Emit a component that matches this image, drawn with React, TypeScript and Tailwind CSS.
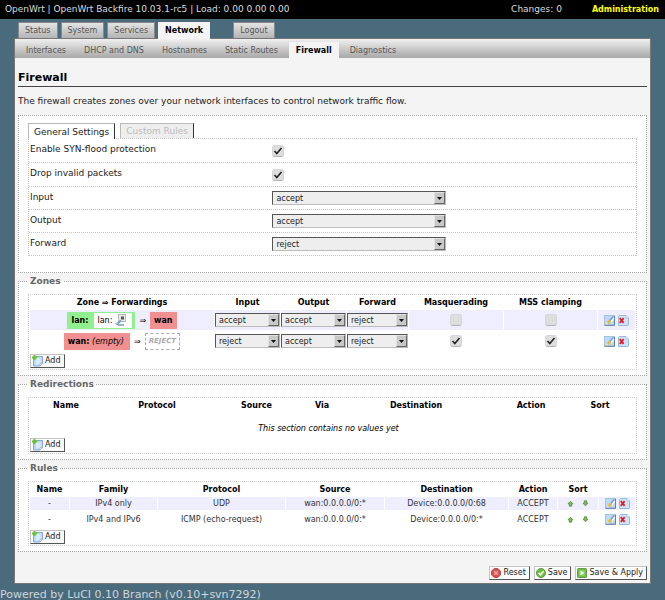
import React from "react";

function AddIcon() {
  return (
    <svg width="11" height="12" viewBox="0 0 11 12" aria-hidden="true">
      <path d="M1.500 1.500h9v7l-2.500 2.500h-6.500z" fill="#bcdcf8" stroke="#86a8d0" />
      <path d="M4 3.500h4.500v4L6.500 9.500H4z" fill="#d9ecfc" />
      <path d="M10.500 8.500H8V11z" fill="#fff" stroke="#86a8d0" strokeWidth="0.600" />
      <path d="M2.500 0v5M0 2.500h5" stroke="#6cc02e" strokeWidth="1.800" />
    </svg>
  );
}

function EditIcon() {
  return (
    <svg width="11" height="11" viewBox="0 0 11 11" aria-hidden="true">
      <rect x="0.500" y="0.500" width="10" height="9.500" fill="#bcdaf6" stroke="#a3c2e4" />
      <path d="M0.500 10.300h10V1" fill="none" stroke="#5f7fa8" />
      <path d="M9.300 1.500L6 5.500" stroke="#6f9fdc" strokeWidth="1.800" />
      <path d="M9.800 3L7 7" stroke="#f4faff" strokeWidth="1.400" />
      <path d="M6.200 5.200L3.600 8.500" stroke="#e8b92c" strokeWidth="2.600" />
      <path d="M2.600 7.200L2 9.500l2.600-.6z" fill="#fbe9a0" />
    </svg>
  );
}

function DeleteIcon() {
  return (
    <svg width="11" height="11" viewBox="0 0 11 11" aria-hidden="true">
      <path d="M0.500 1.500l1-1H8L10.500 3v7l-.5.500H0.500z" fill="#cde3f9" stroke="#98b9e0" />
      <path d="M8 0.500V3h2.500" fill="#fff" stroke="#98b9e0" strokeWidth="0.700" />
      <path d="M1.800 3.200l3.800 4.600M5.600 3.200L1.800 7.800" stroke="#e0222a" strokeWidth="1.900" />
    </svg>
  );
}

function ArrowIcon({ down = false }: { down?: boolean }) {
  return (
    <svg width="7" height="7" viewBox="0 0 7 7" aria-hidden="true">
      <path
        d={down ? "M3.500 5.800L1 3.200h1.300V0.800h2.400v2.400H6z" : "M3.500 1.200L6 3.800H4.700v2.400H2.300V3.800H1z"}
        fill="#7cc04a"
        stroke="#5c8644"
        strokeWidth="0.800"
      />
    </svg>
  );
}

function NetworkIcon() {
  return (
    <svg width="12" height="12" viewBox="0 0 12 12" aria-hidden="true">
      <rect x="3.500" y="0.500" width="7" height="7" fill="#e8e8e8" stroke="#bbb" />
      <rect x="6" y="2.500" width="3" height="3" fill="#555" />
      <path d="M6 6.500L2.500 9.500" stroke="#6f9bd0" strokeWidth="2" />
      <path d="M0.500 9.500l3 1.500h5.500" fill="none" stroke="#7898bd" strokeWidth="1.300" />
    </svg>
  );
}

function ResetIcon() {
  return (
    <svg width="10" height="10" viewBox="0 0 11 11" aria-hidden="true">
      <path d="M3.500 0.500h4l3 3v4l-3 3h-4l-3-3v-4z" fill="#d85050" stroke="#a84848" />
      <path d="M3.500 3.500l4 4M7.500 3.500l-4 4" stroke="#eba8a8" strokeWidth="1.500" />
    </svg>
  );
}

function SaveIcon() {
  return (
    <svg width="10" height="10" viewBox="0 0 11 11" aria-hidden="true">
      <circle cx="5.500" cy="5.500" r="5" fill="#6cc040" stroke="#5a9440" />
      <path d="M2.800 5.500l2 2 3.500-4" fill="none" stroke="#fff" strokeWidth="1.600" />
    </svg>
  );
}

function ApplyIcon() {
  return (
    <svg width="10" height="10" viewBox="0 0 11 11" aria-hidden="true">
      <rect x="0.500" y="0.500" width="10" height="10" rx="1" fill="#6cc040" stroke="#5a9440" />
      <rect x="2.500" y="2.500" width="6" height="6" fill="#8fd46a" />
      <path d="M4 3l4 2.500L4 8z" fill="#fff" />
    </svg>
  );
}

function Button({ icon, children }: { icon: React.ReactNode; children: React.ReactNode }) {
  return (
    <button
      type="button"
      className="flex h-[14px] items-center gap-[2px] border border-t-[#c4c4c4] border-r-[#555] border-b-[#555] border-l-[#c4c4c4] bg-[#fcfcfc] pr-[3px] pl-px text-[8px] leading-[10px] text-[#222]"
    >
      {icon}
      {children}
    </button>
  );
}

function Check({ id, label, checked }: { id?: string; label?: string; checked: boolean }) {
  return (
    <span className="inline-grid align-middle">
      <input
        id={id}
        aria-label={label}
        type="checkbox"
        defaultChecked={checked}
        className="peer col-start-1 row-start-1 size-[12px] appearance-none rounded-[3px] border border-[#d6d6d6] border-b-[#b4b4b4] bg-[#dedede]"
      />
      <svg
        width="12"
        height="12"
        viewBox="0 0 12 12"
        aria-hidden="true"
        className="pointer-events-none invisible col-start-1 row-start-1 peer-checked:visible"
      >
        <path d="M2.500 6l2.300 2.500L9.500 3" fill="none" stroke="#222" strokeWidth="1.600" />
      </svg>
    </span>
  );
}

function Select({ id, label, value }: { id?: string; label?: string; value: string }) {
  return (
    <span className="grid w-full border border-t-[#555] border-r-[#bbb] border-b-[#bbb] border-l-[#555] bg-[#eee]">
      <select
        id={id}
        aria-label={label}
        defaultValue={value}
        className="col-start-1 row-start-1 h-[12px] w-full appearance-none bg-transparent pt-[2px] pl-[3px] text-[8px] leading-[10px] text-[#222]"
      >
        <option>accept</option>
        <option>reject</option>
        <option>drop</option>
      </select>
      <span className="pointer-events-none col-start-1 row-start-1 flex h-[12px] w-[11px] items-center justify-center justify-self-end border border-t-[#e2e2e2] border-r-[#666] border-b-[#666] border-l-[#e2e2e2] bg-[#c8c8c8]">
        <svg width="5" height="3" viewBox="0 0 5 3" aria-hidden="true">
          <path d="M0 0h5L2.500 3z" fill="#111" />
        </svg>
      </span>
    </span>
  );
}

function Section({ title, children }: { title: string; children: React.ReactNode }) {
  return (
    <fieldset className="mt-[3px] min-w-0 border border-dotted border-[#a4a4a4] bg-white px-[9px] pb-[5px]">
      <legend className="px-[2px] text-[9px] leading-[11px] font-bold text-[#666]">{title}</legend>
      <div className="mt-[7px] border border-dotted border-[#cccccc] pb-px">
        {children}
        <div className="mt-[2px] ml-px flex">
          <Button icon={<AddIcon />}>Add</Button>
        </div>
      </div>
    </fieldset>
  );
}

const tableClass =
  "w-full table-fixed border-separate border-spacing-px text-center text-[8px] leading-[13px] text-[#333] [&_td]:p-0 [&_th]:p-0 [&_th]:text-black";

function RowActions() {
  return (
    <div className="flex items-center justify-center gap-[3px]">
      <button type="button" aria-label="Edit">
        <EditIcon />
      </button>
      <button type="button" aria-label="Delete">
        <DeleteIcon />
      </button>
    </div>
  );
}

function ZoneCells({ zone, input, checked }: { zone: string; input: string; checked: boolean }) {
  return (
    <>
      <td>
        <Select label={`${zone} input`} value={input} />
      </td>
      <td>
        <Select label={`${zone} output`} value="accept" />
      </td>
      <td>
        <Select label={`${zone} forward`} value="reject" />
      </td>
      <td>
        <Check label={`${zone} masquerading`} checked={checked} />
      </td>
      <td>
        <Check label={`${zone} MSS clamping`} checked={checked} />
      </td>
      <td>
        <RowActions />
      </td>
    </>
  );
}

function Zones() {
  return (
    <table className={tableClass}>
      <colgroup>
        <col className="w-[184px]" />
        <col className="w-[65px]" />
        <col className="w-[65px]" />
        <col className="w-[61px]" />
        <col className="w-[94px]" />
        <col className="w-[93px]" />
        <col className="w-[37px]" />
      </colgroup>
      <thead>
        <tr>
          <th>Zone ⇒ Forwardings</th>
          <th>Input</th>
          <th>Output</th>
          <th>Forward</th>
          <th>Masquerading</th>
          <th>MSS clamping</th>
          <th />
        </tr>
      </thead>
      <tbody>
        <tr className="h-[20px] [&_td]:bg-[#eeeeff]">
          <td>
            <div className="flex items-center justify-center gap-1 text-black">
              <span className="flex h-[17px] items-center gap-[6px] bg-[#90f090] pr-[3px] pl-1">
                <b>lan:</b>
                <span className="flex h-[15px] items-center gap-[3px] bg-white pr-[5px] pl-[3px]">
                  lan: <NetworkIcon />
                </span>
              </span>
              <span>⇒</span>
              <b className="h-[17px] bg-[#f09090] px-1 leading-[17px]">wan</b>
            </div>
          </td>
          <ZoneCells zone="lan" input="accept" checked={false} />
        </tr>
        <tr className="h-[20px]">
          <td>
            <div className="flex items-center justify-center gap-1 text-black">
              <span className="h-[17px] bg-[#f09090] pr-[6px] pl-1 leading-[17px]">
                <b>wan:</b> <i>(empty)</i>
              </span>
              <span>⇒</span>
              <b className="h-[17px] border border-dashed border-[#aaa] px-[3px] text-[7px] leading-[15px] text-[#aaa] italic">
                REJECT
              </b>
            </div>
          </td>
          <ZoneCells zone="wan" input="reject" checked />
        </tr>
      </tbody>
    </table>
  );
}

function Redirections() {
  return (
    <table className={tableClass}>
      <colgroup>
        <col className="w-[72px]" />
        <col className="w-[108px]" />
        <col className="w-[89px]" />
        <col className="w-[40px]" />
        <col className="w-[146px]" />
        <col className="w-[82px]" />
        <col className="w-[54px]" />
        <col className="w-[7px]" />
      </colgroup>
      <thead>
        <tr>
          <th>Name</th>
          <th>Protocol</th>
          <th>Source</th>
          <th>Via</th>
          <th>Destination</th>
          <th>Action</th>
          <th>Sort</th>
          <th />
        </tr>
      </thead>
      <tbody>
        <tr>
          <td colSpan={7}>
            <div className="pt-[9px] text-black italic">This section contains no values yet</div>
          </td>
          <td />
        </tr>
      </tbody>
    </table>
  );
}

const rules = [
  { family: "IPv4 only", protocol: "UDP", destination: "Device:0.0.0.0/0:68" },
  { family: "IPv4 and IPv6", protocol: "ICMP (echo-request)", destination: "Device:0.0.0.0/0:*" },
];

function Rules() {
  return (
    <table className={tableClass}>
      <colgroup>
        <col className="w-[39px]" />
        <col className="w-[87px]" />
        <col className="w-[127px]" />
        <col className="w-[98px]" />
        <col className="w-[123px]" />
        <col className="w-[48px]" />
        <col className="w-[40px]" />
        <col className="w-[36px]" />
      </colgroup>
      <thead>
        <tr>
          <th>Name</th>
          <th>Family</th>
          <th>Protocol</th>
          <th>Source</th>
          <th>Destination</th>
          <th>Action</th>
          <th>Sort</th>
          <th />
        </tr>
      </thead>
      <tbody>
        {rules.map((rule, i) => (
          <tr key={rule.family} className={i === 0 ? "[&_td]:bg-[#eeeeff]" : "h-[16px]"}>
            <td>-</td>
            <td>{rule.family}</td>
            <td>{rule.protocol}</td>
            <td>wan:0.0.0.0/0:*</td>
            <td>{rule.destination}</td>
            <td>ACCEPT</td>
            <td>
              <div className="flex items-center justify-center gap-2">
                <button type="button" aria-label="Move up">
                  <ArrowIcon />
                </button>
                <button type="button" aria-label="Move down">
                  <ArrowIcon down />
                </button>
              </div>
            </td>
            <td>
              <RowActions />
            </td>
          </tr>
        ))}
      </tbody>
    </table>
  );
}

function SettingRow({ id, label, children }: { id: string; label: string; children: React.ReactNode }) {
  return (
    <div className="flex border-b border-dotted border-[#c4c4c4] pl-px">
      <label htmlFor={id} className="w-[40%] pt-1 leading-[12px]">
        {label}
      </label>
      <div className="flex flex-1 items-center">{children}</div>
    </div>
  );
}

function GeneralSettings() {
  const policies = [
    ["Input", "accept"],
    ["Output", "accept"],
    ["Forward", "reject"],
  ];
  return (
    <section className="mt-[8px] border border-dotted border-[#a4a4a4] bg-white px-[9px] pt-[7px] pb-[16px] text-[9px] text-[#222]">
      <div className="flex gap-[5px] leading-[14px]">
        <button
          type="button"
          className="z-10 -mb-px h-[16px] border border-b-0 border-t-[#bbb] border-r-[#333] border-l-[#bbb] bg-white px-[5px]"
        >
          General Settings
        </button>
        <button
          type="button"
          className="h-[15px] border border-b-0 border-t-[#bbb] border-r-[#333] border-l-[#bbb] bg-[#eee] px-[5px] text-[#bbb]"
        >
          Custom Rules
        </button>
      </div>
      <div className="border border-b-0 border-dotted border-[#c4c4c4]">
        <div className="*:h-[24px]">
          <SettingRow id="syn" label="Enable SYN-flood protection">
            <Check id="syn" checked />
          </SettingRow>
          <SettingRow id="drop" label="Drop invalid packets">
            <Check id="drop" checked />
          </SettingRow>
        </div>
        <div className="*:h-[23px]">
          {policies.map(([label, value]) => (
            <SettingRow key={label} id={label} label={label}>
              <div className="w-[174px]">
                <Select id={label} value={value} />
              </div>
            </SettingRow>
          ))}
        </div>
      </div>
    </section>
  );
}

const navTab =
  "border border-b-0 border-[#888] px-[6px] h-[16px] leading-[16px] text-[#555] bg-linear-to-b from-[#e4e4e4] to-[#b4b4b4]";

export default function App() {
  return (
    <div className="min-h-screen bg-[#4a6b7c] font-['DejaVu_Sans',Verdana,sans-serif] text-[#222]">
      <header className="flex h-[19px] items-center justify-between bg-black pr-[6px] pl-[5px] text-[9px] text-[#ddd]">
        <span>OpenWrt | OpenWrt Backfire 10.03.1-rc5 | Load: 0.00 0.00 0.00</span>
        <span className="flex items-center gap-[30px]">
          <span>Changes: 0</span>
          <a href="#admin" className="text-[8px] font-bold text-[#ffff00]">
            Administration
          </a>
        </span>
      </header>

      <div className="px-[14px] pt-[3px]">
        <nav className="flex gap-[3px] pl-1 text-[8px]">
          <a href="#status" className={navTab}>
            Status
          </a>
          <a href="#system" className={navTab}>
            System
          </a>
          <a href="#services" className={navTab}>
            Services
          </a>
          <a
            href="#network"
            className="z-10 -mb-px mr-[20px] h-[17px] border border-b-0 border-[#f4f4f4] bg-[#f4f4f4] px-[6px] leading-[16px] font-bold text-black"
          >
            Network
          </a>
          <a href="#logout" className={navTab}>
            Logout
          </a>
        </nav>

        <main className="border border-[#777] bg-[#f4f4f4]">
          <nav className="flex h-[19px] bg-linear-to-b from-[#f0f0f0] to-[#a8a8a8] pl-[2px] text-[8px] leading-[24px] text-[#555] *:mx-[2px] *:px-[7px]">
            <a href="#interfaces">Interfaces</a>
            <a href="#dhcp">DHCP and DNS</a>
            <a href="#hostnames">Hostnames</a>
            <a href="#routes">Static Routes</a>
            <a href="#firewall" className="mt-[3px] bg-[#f4f4f4] leading-[18px] font-bold text-black">
              Firewall
            </a>
            <a href="#diagnostics">Diagnostics</a>
          </nav>

          <div className="px-[3px] pb-[3px]">
            <h2 className="mt-[12px] border-b border-[#444] pb-px text-[11px] leading-[15px] font-bold text-black">
              Firewall
            </h2>
            <p className="mt-[8px] text-[9px] leading-[12px]">
              The firewall creates zones over your network interfaces to control network traffic flow.
            </p>

            <GeneralSettings />
            <Section title="Zones">
              <Zones />
            </Section>
            <Section title="Redirections">
              <Redirections />
            </Section>
            <Section title="Rules">
              <Rules />
            </Section>

            <div className="mt-[14px] flex justify-end gap-1">
              <Button icon={<ResetIcon />}>Reset</Button>
              <Button icon={<SaveIcon />}>Save</Button>
              <Button icon={<ApplyIcon />}>Save &amp; Apply</Button>
            </div>
          </div>
        </main>
      </div>

      <footer className="pt-1 text-[11px] leading-[13px] text-[#ccd6dc]">
        Powered by LuCI 0.10 Branch (v0.10+svn7292)
      </footer>
    </div>
  );
}
